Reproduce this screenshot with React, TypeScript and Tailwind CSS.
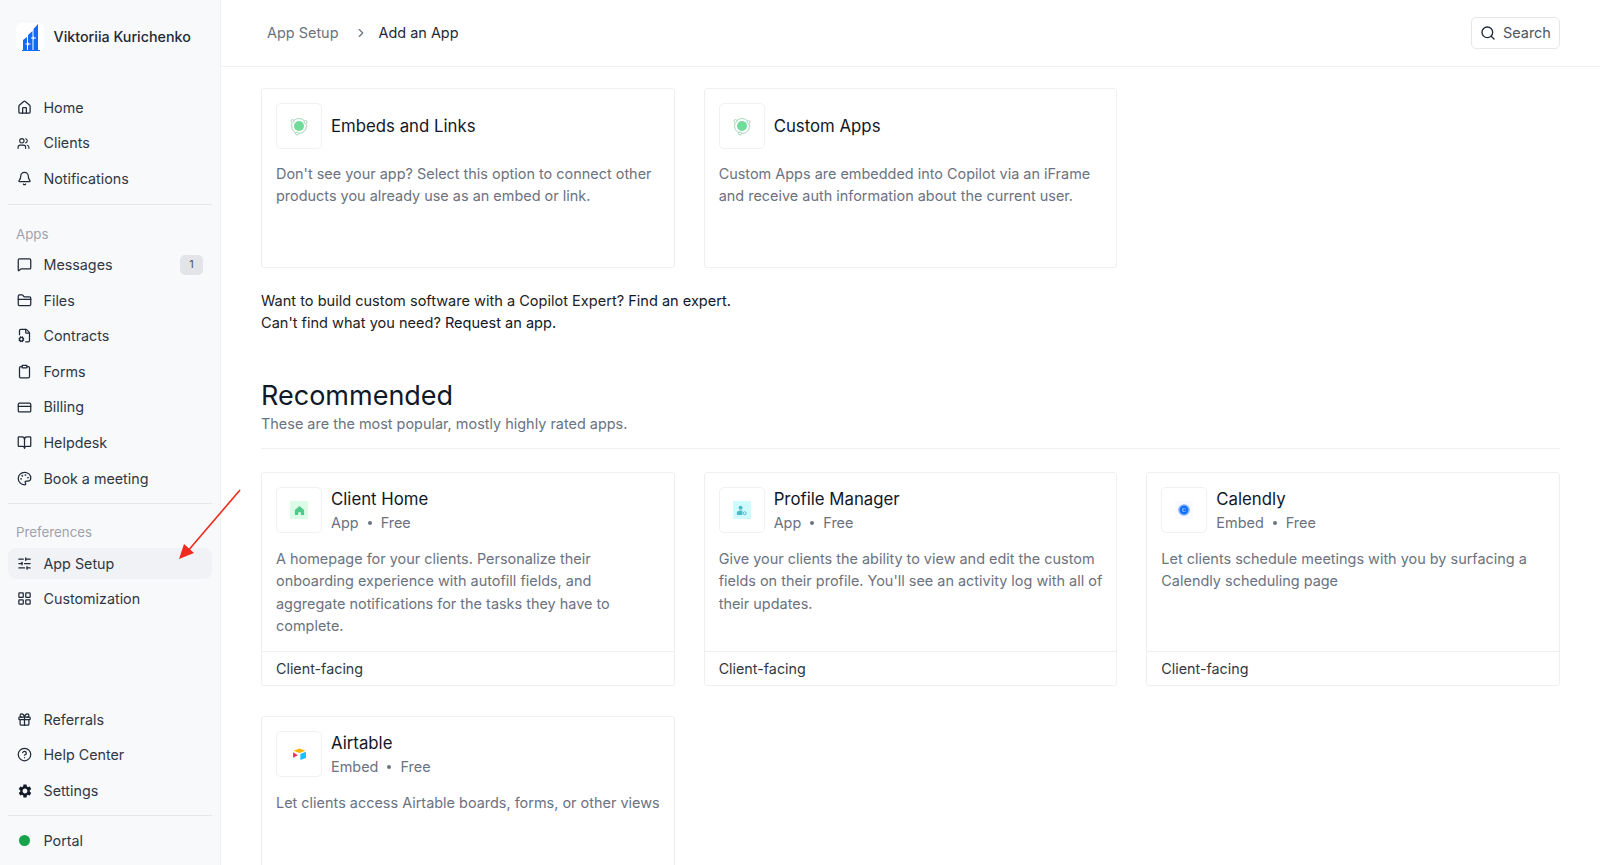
import { ReactNode } from "react";
import {
  Bell,
  BookOpen,
  ChevronRight,
  CircleHelp,
  Clipboard,
  CreditCard,
  FileCog,
  FolderClosed,
  Gift,
  Home,
  LayoutGrid,
  MessageSquare,
  Palette,
  Search,
  SlidersHorizontal,
  Users,
} from "lucide-react";
import { MdSettings } from "react-icons/md";

const iconClass = "h-[15px] w-[15px] text-[#1f2937]";

function Logo() {
  return (
    <div className="flex h-7 w-7 items-center justify-center rounded-md bg-white">
      <svg viewBox="0 0 28 28" className="h-7 w-7">
        <path d="M7 27V17l4-3v13z M12 27V12l4.500-4v19z M17.500 27V6L22 1v26z" fill="#1669f2" />
        <path d="M6 27.500h18" stroke="#1669f2" strokeWidth="1" />
        <path d="M9.500 21h5M12 19.500v3M15 15h5M17.500 13.500v3" stroke="#fff" strokeWidth="1" />
      </svg>
    </div>
  );
}

function NavItem({ icon, label, active, badge }: { icon: ReactNode; label: string; active?: boolean; badge?: string }) {
  return (
    <div className={`flex h-[31px] items-center rounded-lg pl-[8.500px] pr-[9px] ${active ? "bg-[#f1f2f5]" : ""}`}>
      <span className="flex w-[27px] shrink-0 items-center">{icon}</span>
      <span className="text-[14.3px] text-[#2f3744]">{label}</span>
      {badge && (
        <span className="ml-auto flex h-[20px] w-[23px] items-center justify-center rounded-[5px] bg-[#e2e4e8] text-[11px] text-[#4b5563]">
          {badge}
        </span>
      )}
    </div>
  );
}

function Sidebar() {
  return (
    <aside className="flex h-full w-[221px] shrink-0 flex-col border-r border-[#f0f1f4] bg-[#f8f9fb] px-2">
      <div className="flex h-[74px] items-center gap-[9.500px] pl-2">
        <Logo />
        <span className="text-[14.3px] font-medium text-[#1f2937]">Viktoriia Kurichenko</span>
      </div>
      <nav className="mt-[18px] flex flex-col gap-[4.6px]">
        <NavItem icon={<Home className={iconClass} />} label="Home" />
        <NavItem icon={<Users className="h-[13px] w-[13px] text-[#1f2937]" />} label="Clients" />
        <NavItem icon={<Bell className={iconClass} />} label="Notifications" />
      </nav>
      <div className="mt-[10px] border-t border-[#e5e6e9]" />
      <div className="mt-[19px] pl-2 text-[13.300px] leading-5 text-[#9ca3af]">Apps</div>
      <nav className="mt-[5px] flex flex-col gap-[4.6px]">
        <NavItem icon={<MessageSquare className={iconClass} />} label="Messages" badge="1" />
        <NavItem icon={<FolderClosed className={iconClass} />} label="Files" />
        <NavItem icon={<FileCog className={iconClass} />} label="Contracts" />
        <NavItem icon={<Clipboard className={iconClass} />} label="Forms" />
        <NavItem icon={<CreditCard className={iconClass} />} label="Billing" />
        <NavItem icon={<BookOpen className={iconClass} />} label="Helpdesk" />
        <NavItem icon={<Palette className={iconClass} />} label="Book a meeting" />
      </nav>
      <div className="mt-[9px] border-t border-[#e5e6e9]" />
      <div className="mt-[18px] pl-2 text-[13.300px] leading-5 text-[#9ca3af]">Preferences</div>
      <nav className="mt-[6px] flex flex-col gap-[4.6px]">
        <NavItem icon={<SlidersHorizontal className={iconClass} />} label="App Setup" active />
        <NavItem icon={<LayoutGrid className={iconClass} />} label="Customization" />
      </nav>
      <div className="mt-auto flex flex-col gap-[4.6px]">
        <NavItem icon={<Gift className={iconClass} />} label="Referrals" />
        <NavItem icon={<CircleHelp className={iconClass} />} label="Help Center" />
        <NavItem icon={<MdSettings className="h-[16px] w-[16px] text-[#111827]" />} label="Settings" />
      </div>
      <div className="mt-[9px] border-t border-[#e5e6e9]" />
      <div className="mb-[9px] mt-[9px]">
        <NavItem icon={<span className="ml-[2px] block h-[11px] w-[11px] rounded-full bg-[#16a34a]" />} label="Portal" />
      </div>
    </aside>
  );
}

function OrbitIcon() {
  return (
    <svg viewBox="0 0 20 20" className="h-[20px] w-[20px]">
      <circle cx="10" cy="10" r="7.500" fill="none" stroke="#a9d8bd" strokeWidth="1" />
      <circle cx="10" cy="10" r="5" fill="#6fdc9a" />
      <circle cx="3.500" cy="5" r="1.500" fill="#fff" stroke="#a9d8bd" />
      <circle cx="16.500" cy="6" r="1.500" fill="#fff" stroke="#a9d8bd" />
      <circle cx="8" cy="17.500" r="1.500" fill="#fff" stroke="#a9d8bd" />
    </svg>
  );
}

function HomeGlyph() {
  return (
    <div className="flex h-[18px] w-[18px] items-center justify-center bg-[#dcfce7]">
      <svg viewBox="0 0 12 12" className="h-[11px] w-[11px]">
        <path d="M6 1 11 5.500V11H7.500V8h-3v3H1V5.500z" fill="#4fc98a" />
      </svg>
    </div>
  );
}

function ProfileGlyph() {
  return (
    <div className="flex h-[18px] w-[18px] items-center justify-center bg-[#cffafe]">
      <svg viewBox="0 0 12 12" className="h-[11px] w-[11px]">
        <circle cx="5" cy="3" r="2.200" fill="#4cb8c9" />
        <path d="M1 11V8.500C1 7 2.500 6 5 6c1 0 1.500.2 2 .4V11z" fill="#4cb8c9" />
        <circle cx="9.500" cy="9" r="1.600" fill="none" stroke="#4cb8c9" />
      </svg>
    </div>
  );
}

function CalendlyGlyph() {
  return (
    <div className="flex h-[18px] w-[18px] items-center justify-center bg-[#fafbff]">
      <svg viewBox="0 0 12 12" className="h-[12px] w-[12px]">
        <circle cx="6" cy="6" r="5.800" fill="#7fb0ff" />
        <circle cx="6" cy="6" r="4.200" fill="#0b6bff" />
        <circle cx="6" cy="6" r="2.200" fill="#7fb0ff" />
        <circle cx="6.500" cy="6" r="1.200" fill="#0b6bff" />
      </svg>
    </div>
  );
}

function AirtableGlyph() {
  return (
    <div className="flex h-[18px] w-[18px] items-center justify-center bg-white">
      <svg viewBox="0 0 14 12" className="h-[13px] w-[15px]">
        <path d="M7 .5 12.500 2.500 7 4.500 1.500 2.500z" fill="#fcb400" />
        <path d="M7.800 5.500 13 3.500v5.700L7.800 11.200z" fill="#18bfff" />
        <path d="M1 4v5l4.500-2.200z" fill="#f82b60" />
      </svg>
    </div>
  );
}

function IconBox({ children }: { children: ReactNode }) {
  return (
    <div className="flex h-[46px] w-[46px] shrink-0 items-center justify-center rounded-[5px] border border-[#f0f1f3] bg-white">
      {children}
    </div>
  );
}

function AppCard({
  icon,
  title,
  meta,
  desc,
  footer,
}: {
  icon: ReactNode;
  title: string;
  meta?: [string, string];
  desc: string;
  footer?: string;
}) {
  return (
    <div className={`flex flex-col rounded-[3px] border border-[#eeeff2] bg-white ${footer ? "h-[214px]" : "h-[180px]"}`}>
      <div className="flex-1 px-[14px] pt-[14px]">
        <div className="flex items-center gap-[9px]">
          <IconBox>{icon}</IconBox>
          <div className="flex flex-col">
            <span className="text-[16.800px] leading-[24px] text-[#111827]">{title}</span>
            {meta && (
              <span className="mt-[1px] flex items-center gap-[9px] text-[14.45px] leading-[22px] text-[#6b7280]">
                {meta[0]}
                <span className="h-[4px] w-[4px] rounded-full bg-[#6b7280]" />
                {meta[1]}
              </span>
            )}
          </div>
        </div>
        <p className="mt-[14px] text-[14.45px] leading-[22.400px] text-[#6b7280]">{desc}</p>
      </div>
      {footer && (
        <div className="flex h-[34px] items-center border-t border-[#eeeff2] px-[14px] text-[14.3px] text-[#2f3744]">
          {footer}
        </div>
      )}
    </div>
  );
}

function Arrow() {
  return (
    <svg viewBox="0 0 70 80" className="pointer-events-none absolute left-[175px] top-[486px] h-[80px] w-[70px]">
      <path d="M65 4 12 66" stroke="#f02a1c" strokeWidth="1.600" fill="none" />
      <path d="M4 73 9 58 19 67z" fill="#f02a1c" />
    </svg>
  );
}

export default function App() {
  return (
    <div className="relative flex h-screen w-full overflow-hidden bg-white font-['Inter',sans-serif]">
      <Sidebar />
      <main className="flex min-w-0 flex-1 flex-col">
        <header className="flex h-[67px] shrink-0 items-center justify-between border-b border-[#f0f1f3] pl-[46px] pr-[40px]">
          <div className="flex items-center text-[14.45px]">
            <span className="text-[#6b7280]">App Setup</span>
            <ChevronRight className="ml-[16px] mr-[10px] h-[14px] w-[14px] text-[#6b7280]" />
            <span className="text-[#1f2937]">Add an App</span>
          </div>
          <div className="flex h-[32px] w-[89px] items-center gap-[7px] rounded-[5px] border border-[#e5e7eb] pl-[8px] text-[14.45px] text-[#4b5563]">
            <Search className="h-[16px] w-[16px] text-[#1f2937]" />
            Search
          </div>
        </header>
        <div className="flex-1 overflow-hidden pl-[40px] pr-[40px] pt-[21px]">
          <div className="grid grid-cols-3 gap-[29px]">
            <AppCard
              icon={<OrbitIcon />}
              title="Embeds and Links"
              desc="Don't see your app? Select this option to connect other products you already use as an embed or link."
            />
            <AppCard
              icon={<OrbitIcon />}
              title="Custom Apps"
              desc="Custom Apps are embedded into Copilot via an iFrame and receive auth information about the current user."
            />
          </div>
          <div className="mt-[22px] text-[14.55px] leading-[22.400px] text-[#222222]">
            <p>
              Want to build custom software with a Copilot Expert? <span className="text-[#0f172a]">Find an expert.</span>
            </p>
            <p>
              Can't find what you need? <span className="text-[#0f172a]">Request an app.</span>
            </p>
          </div>
          <h2 className="mt-[43px] text-[27px] leading-[36px] text-[#111827]">Recommended</h2>
          <p className="text-[14.45px] leading-[20px] text-[#6b7280]">These are the most popular, mostly highly rated apps.</p>
          <div className="mt-[14px] border-t border-[#eeeff2]" />
          <div className="mt-[23px] grid grid-cols-3 gap-x-[29px] gap-y-[30px]">
            <AppCard
              icon={<HomeGlyph />}
              title="Client Home"
              meta={["App", "Free"]}
              desc="A homepage for your clients. Personalize their onboarding experience with autofill fields, and aggregate notifications for the tasks they have to complete."
              footer="Client-facing"
            />
            <AppCard
              icon={<ProfileGlyph />}
              title="Profile Manager"
              meta={["App", "Free"]}
              desc="Give your clients the ability to view and edit the custom fields on their profile. You'll see an activity log with all of their updates."
              footer="Client-facing"
            />
            <AppCard
              icon={<CalendlyGlyph />}
              title="Calendly"
              meta={["Embed", "Free"]}
              desc="Let clients schedule meetings with you by surfacing a Calendly scheduling page"
              footer="Client-facing"
            />
            <AppCard
              icon={<AirtableGlyph />}
              title="Airtable"
              meta={["Embed", "Free"]}
              desc="Let clients access Airtable boards, forms, or other views"
            />
          </div>
        </div>
      </main>
      <Arrow />
    </div>
  );
}
